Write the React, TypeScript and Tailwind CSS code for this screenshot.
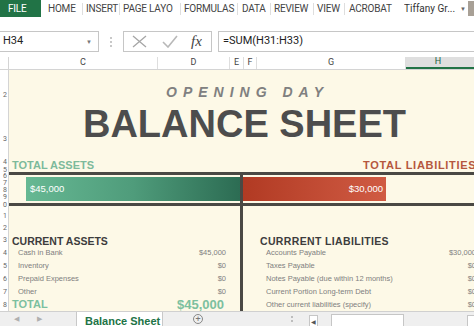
import React from "react";

function Sep() {
  return <span className="w-px h-[12px] bg-[#dedede] shrink-0" />;
}

const rowHeights: [string, number][] = [
  ["2", 50],
  ["3", 38],
  ["4", 9],
  ["5", 6],
  ["6", 7],
  ["7", 7],
  ["8", 7],
  ["9", 7],
  ["0", 9],
  ["1", 12],
  ["2", 12],
  ["3", 13],
  ["4", 13],
  ["5", 13],
  ["6", 13],
  ["7", 13],
  ["8", 13],
];

const assets: [string, string][] = [
  ["Cash in Bank", "$45,000"],
  ["Inventory", "$0"],
  ["Prepaid Expenses", "$0"],
  ["Other", "$0"],
];

const liabilities: [string, string][] = [
  ["Accounts Payable", "$30,000"],
  ["Taxes Payable", "$0"],
  ["Notes Payable (due within 12 months)", "$0"],
  ["Current Portion Long-term Debt", "$0"],
  ["Other current liabilities (specify)", "$0"],
];

export default function App() {
  return (
    <div className="w-[474px] h-[326px] overflow-hidden bg-white font-['Roboto',sans-serif]">
      <div className="w-[480px] h-[326px] flex flex-col">
        {/* Ribbon tabs */}
        <div className="h-[17px] flex items-center text-[10px] text-[#444] tracking-[-0.2px] shrink-0">
          <div className="w-[41px] h-full bg-[#217346] text-white flex items-center pl-[8px]">FILE</div>
          <div className="w-[41px] pl-[7px] whitespace-nowrap overflow-hidden">HOME</div>
          <Sep />
          <div className="w-[36px] pl-[3px] whitespace-nowrap overflow-hidden">INSERT</div>
          <Sep />
          <div className="w-[60px] pl-[3px] whitespace-nowrap overflow-hidden">PAGE LAYO</div>
          <Sep />
          <div className="w-[56px] pl-[3px] whitespace-nowrap overflow-hidden">FORMULAS</div>
          <Sep />
          <div className="w-[32px] pl-[4px] whitespace-nowrap overflow-hidden">DATA</div>
          <Sep />
          <div className="w-[42px] pl-[3px] whitespace-nowrap overflow-hidden">REVIEW</div>
          <Sep />
          <div className="w-[30px] pl-[3px] whitespace-nowrap overflow-hidden">VIEW</div>
          <Sep />
          <div className="w-[59px] pl-[4px] whitespace-nowrap overflow-hidden">ACROBAT</div>
          <div className="w-[56px] whitespace-nowrap overflow-hidden tracking-normal text-[#333]">Tiffany Gr...</div>
          <div className="w-[8px] text-[6px] text-[#666]">▼</div>
          <div className="w-[12px] h-[15px] bg-[#a8a096]" />
        </div>

        <div className="h-[14px] shrink-0" />

        {/* Formula bar */}
        <div className="h-[21px] flex items-stretch shrink-0">
          <div className="w-[99px] border border-l-0 border-[#c6c6c6] flex items-center justify-between pl-[3px] pr-[6px]">
            <span className="text-[11px] text-[#222]">H34</span>
            <span className="text-[6px] text-[#777]">▼</span>
          </div>
          <div className="w-[24px] flex flex-col items-center justify-center gap-[2px]">
            <span className="w-[2px] h-[2px] bg-[#c8c8c8]" />
            <span className="w-[2px] h-[2px] bg-[#c8c8c8]" />
            <span className="w-[2px] h-[2px] bg-[#c8c8c8]" />
          </div>
          <div className="w-[89px] border border-[#c6c6c6] flex items-center pl-[7px] gap-[13px]">
            <svg width="17" height="13" viewBox="0 0 17 13">
              <path d="M2 1 L15 12 M15 1 L2 12" stroke="#a6a6a6" strokeWidth="1.3" fill="none" />
            </svg>
            <svg width="17" height="13" viewBox="0 0 17 13">
              <path d="M2 7 L7 12 L16 1" stroke="#b8b8b8" strokeWidth="1.6" fill="none" />
            </svg>
            <span className="font-['Liberation_Serif',serif] italic text-[15px] text-[#444] leading-none">fx</span>
          </div>
          <div className="w-[6px]" />
          <div className="flex-1 border border-[#c6c6c6] flex items-center pl-[4px] text-[11px] text-[#222]">
            =SUM(H31:H33)
          </div>
        </div>

        <div className="h-[5px] shrink-0" />

        {/* Column headers */}
        <div className="h-[13px] flex border-b border-[#d4d4d4] text-[9px] text-[#444] shrink-0">
          <div className="w-[9px] border-r border-[#d4d4d4]" />
          <div className="w-[149px] border-r border-[#dedede] flex items-center justify-center">C</div>
          <div className="w-[72px] border-r border-[#dedede] flex items-center justify-center">D</div>
          <div className="w-[14px] border-r border-[#dedede] flex items-center justify-center">E</div>
          <div className="w-[13px] border-r border-[#dedede] flex items-center justify-center">F</div>
          <div className="w-[149px] border-r border-[#dedede] flex items-center justify-center">G</div>
          <div className="flex-1 bg-[#dfdfdf] border-b-2 border-[#217346] flex items-center justify-center text-[#215f3f] pr-[10px]">
            H
          </div>
        </div>

        {/* Sheet body */}
        <div className="h-[241px] flex shrink-0">
          <div className="w-[9px] border-r border-[#d4d4d4] bg-white overflow-hidden flex flex-col text-[7px] text-[#666]">
            {rowHeights.map(([l, h], i) => (
              <div
                key={i}
                className="flex items-center justify-end pr-[1px] overflow-hidden leading-none shrink-0"
                style={{ height: h }}
              >
                {l}
              </div>
            ))}
          </div>

          <div className="flex-1 bg-[#fdf9e7] flex flex-col font-['Liberation_Sans',Arial,sans-serif]">
            <div className="pt-[15px] pl-[6px] text-center text-[14px] leading-[14px] font-bold italic tracking-[6px] text-[#808080]">
              OPENING DAY
            </div>
            <div className="mt-[6px] text-center text-[38px] leading-[38px] font-bold text-[#4d4d4d]">
              BALANCE SHEET
            </div>
            <div className="mt-[17px] h-[11px] flex text-[11px] leading-[11px] font-bold">
              <div className="w-[234px] pl-[3px] text-[#7dba9b]">TOTAL ASSETS</div>
              <div className="pl-[120px] text-[#b5573e] tracking-[0.7px] whitespace-nowrap">TOTAL LIABILITIES</div>
            </div>
            <div className="mt-[1px] h-[3px] bg-[#4a4944]" />
            <div className="h-[28px] flex">
              <div className="w-[231px] py-[2px] pl-[17px] flex">
                <div className="flex-1 bg-linear-to-r from-[#66b893] via-[#4f9c7b] to-[#2c6c53] flex items-center pl-[4px] text-[9.5px] text-white">
                  $45,000
                </div>
              </div>
              <div className="w-[3px] bg-[#4a4944]" />
              <div className="flex-1 py-[2px] flex">
                <div className="w-[143px] bg-linear-to-r from-[#b13a23] to-[#d05b43] flex items-center justify-end pr-[3px] text-[9.5px] text-white">
                  $30,000
                </div>
              </div>
            </div>
            <div className="h-[3px] bg-[#4a4944]" />
            <div className="flex-1 flex">
              <div className="w-[231px] pt-[30px] pl-[3px] pr-[14px] flex flex-col">
                <div className="text-[10.5px] leading-[10.5px] font-bold text-[#3d3d3d]">CURRENT ASSETS</div>
                {assets.map(([n, v]) => (
                  <div key={n} className="h-[13px] flex items-center justify-between pl-[6px] text-[7.5px] text-[#808080] leading-none">
                    <span>{n}</span>
                    <span>{v}</span>
                  </div>
                ))}
                <div className="h-[13px] flex items-center justify-between font-bold text-[#7cc09f] leading-none">
                  <span className="text-[11px]">TOTAL</span>
                  <span className="text-[13px] pr-[2px]">$45,000</span>
                </div>
              </div>
              <div className="w-[3px] bg-[#4a4944]" />
              <div className="flex-1 pt-[30px] pl-[17px] pr-[4px] flex flex-col">
                <div className="text-[10.5px] leading-[10.5px] font-bold text-[#3d3d3d] tracking-[0.35px]">CURRRENT LIABILITIES</div>
                {liabilities.map(([n, v]) => (
                  <div key={n} className="h-[13px] flex items-center justify-between pl-[6px] text-[7.5px] text-[#808080] leading-none whitespace-nowrap">
                    <span>{n}</span>
                    <span>{v}</span>
                  </div>
                ))}
              </div>
            </div>
          </div>
        </div>

        {/* Sheet tabs bar */}
        <div className="h-[15px] flex border-t border-[#d0d0d0] bg-[#efefef] shrink-0">
          <div className="w-[76px] flex items-center text-[7px] text-[#b0b0b0]">
            <span className="pl-[14px]">◀</span>
            <span className="pl-[18px]">▶</span>
          </div>
          <div className="w-[87px] bg-white border-x border-[#c8c8c8] pl-[8px] pt-[2px] text-[11px] leading-[14px] font-bold text-[#217346] font-['Liberation_Sans',Arial,sans-serif]">
            Balance Sheet
          </div>
          <div className="w-[70px] flex items-center justify-center">
            <span className="w-[10px] h-[10px] rounded-full border border-[#888] flex items-center justify-center text-[9px] leading-none text-[#777]">+</span>
          </div>
          <div className="w-[61px] flex flex-col items-end justify-center gap-[2px] pr-[1px]">
            <span className="w-[2px] h-[2px] bg-[#bdbdbd]" />
            <span className="w-[2px] h-[2px] bg-[#bdbdbd]" />
          </div>
          <div className="w-[15px]" />
          <div className="w-[9px] mt-[3px] h-[12px] bg-white border border-[#c6c6c6] flex items-center justify-center text-[6px] text-[#555]">◀</div>
          <div className="w-[13px]" />
          <div className="w-[73px] mt-[2px] h-[13px] bg-white border border-[#c6c6c6]" />
          <div className="w-[63px]" />
          <div className="w-[10px] mt-[3px] h-[12px] bg-white border border-[#c6c6c6]" />
        </div>
      </div>
    </div>
  );
}
